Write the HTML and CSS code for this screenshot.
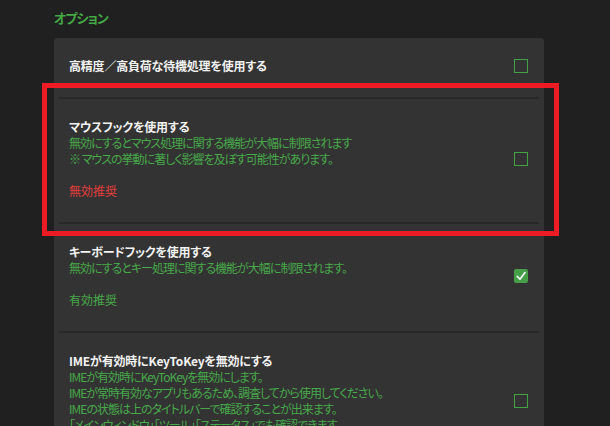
FILE: index.html
```html
<!DOCTYPE html>
<html lang="ja">
<head>
<meta charset="utf-8">
<title>オプション</title>
<link rel="stylesheet" href="styles.css">
</head>
<body>
<div class="page">
  <h2 class="section-title">オプション</h2>
  <div class="card">
    <div class="row">
      <div class="text">
        <div class="label">高精度／高負荷な待機処理を使用する</div>
      </div>
      <span class="check"></span>
    </div>
    <div class="row">
      <div class="text">
        <div class="label">マウスフックを使用する</div>
        <div class="desc">無効にするとマウス処理に関する機能が大幅に制限されます</div>
        <div class="desc">※ マウスの挙動に著しく影響を及ぼす可能性があります。</div>
        <div class="rec bad">無効推奨</div>
      </div>
      <span class="check"></span>
    </div>
    <div class="row">
      <div class="text">
        <div class="label">キーボードフックを使用する</div>
        <div class="desc">無効にするとキー処理に関する機能が大幅に制限されます。</div>
        <div class="rec good">有効推奨</div>
      </div>
      <span class="check on"><svg viewBox="0 0 14 14" width="14" height="14"><polyline points="3.2,7.3 6,10.2 11,3.6" fill="none" stroke="#fff" stroke-width="1.6" stroke-linecap="round" stroke-linejoin="round"/></svg></span>
    </div>
    <div class="row">
      <div class="text">
        <div class="label">IMEが有効時にKeyToKeyを無効にする</div>
        <div class="desc">IMEが有効時にKeyToKeyを無効にします。</div>
        <div class="desc">IMEが常時有効なアプリもあるため、調査してから使用してください。</div>
        <div class="desc">IMEの状態は上のタイトルバーで確認することが出来ます。</div>
        <div class="desc">「メインウィンドウ」「ツール」「ステータス」でも確認できます。</div>
        <div class="desc">&nbsp;</div>
      </div>
      <span class="check"></span>
    </div>
  </div>
  <div class="highlight"></div>
</div>
</body>
</html>
```
FILE: styles.css
```css
html, body {
  margin: 0;
  padding: 0;
  background: #202020;
  height: 100%;
  overflow: hidden;
}
body {
  font-family: "Noto Sans CJK JP", "Noto Sans", sans-serif;
  font-size: 12px;
  line-height: 16px;
  font-feature-settings: "palt";
  color: #ffffff;
}
.page {
  position: relative;
  padding: 10px 0 0 54px;
}
.section-title {
  margin: 0;
  font-size: 13px;
  line-height: 16px;
  font-weight: bold;
  letter-spacing: -1px;
  color: #43a845;
  height: 28px;
}
.card {
  width: 490px;
  background: #333333;
  border-radius: 4px 4px 0 0;
}
.row {
  display: flex;
  align-items: center;
  margin: 0 5px;
  padding: 20px 10px 23px 10px;
  border-bottom: 2px solid #282828;
}
.text {
  flex: 1;
}
.label {
  font-weight: bold;
  letter-spacing: -0.2px;
  color: #f2f2f2;
}
.desc {
  color: #47a94a;
  letter-spacing: -1px;
}
.rec {
  margin-top: 16px;
}
.rec.bad {
  color: #e43d3d;
}
.rec.good {
  color: #47a94a;
}
.check {
  width: 14px;
  height: 14px;
  box-sizing: border-box;
  border: 1px solid #43a047;
  flex: none;
  display: block;
  margin-right: 1px;
}
.check.on {
  border: none;
  background: #479e49;
  border-radius: 2px;
}
.check svg {
  display: block;
}
.highlight {
  position: absolute;
  left: 42px;
  top: 83px;
  width: 517px;
  height: 153px;
  box-sizing: border-box;
  border: 5px solid #ed1c24;
  pointer-events: none;
}
```
